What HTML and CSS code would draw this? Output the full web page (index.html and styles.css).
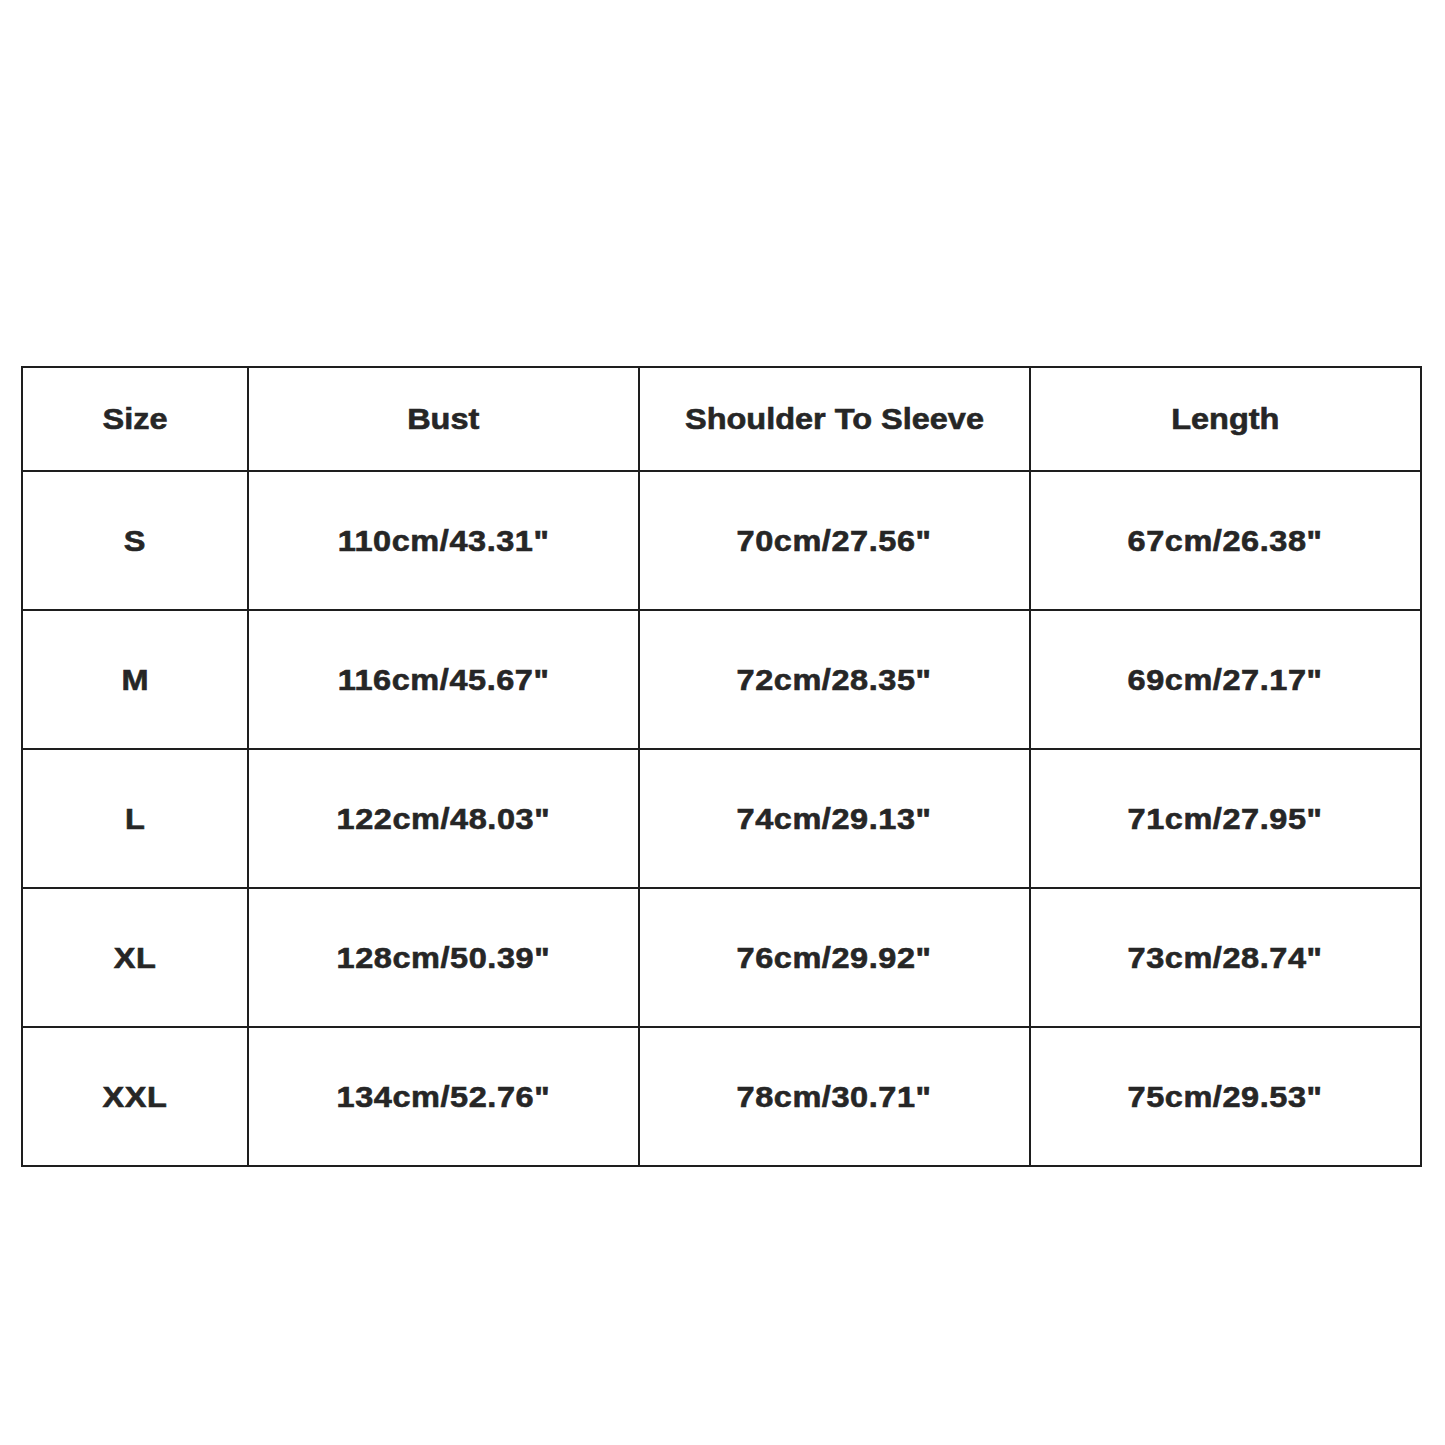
FILE: index.html
```html
<!DOCTYPE html>
<html>
<head>
<meta charset="utf-8">
<link rel="stylesheet" href="styles.css">
</head>
<body>
<div class="chart">
  <div class="cell head"><span>Size</span></div>
  <div class="cell head"><span>Bust</span></div>
  <div class="cell head"><span>Shoulder To Sleeve</span></div>
  <div class="cell head"><span>Length</span></div>

  <div class="cell"><span>S</span></div>
  <div class="cell"><span>110cm/43.31"</span></div>
  <div class="cell"><span>70cm/27.56"</span></div>
  <div class="cell"><span>67cm/26.38"</span></div>

  <div class="cell"><span>M</span></div>
  <div class="cell"><span>116cm/45.67"</span></div>
  <div class="cell"><span>72cm/28.35"</span></div>
  <div class="cell"><span>69cm/27.17"</span></div>

  <div class="cell"><span>L</span></div>
  <div class="cell"><span>122cm/48.03"</span></div>
  <div class="cell"><span>74cm/29.13"</span></div>
  <div class="cell"><span>71cm/27.95"</span></div>

  <div class="cell"><span>XL</span></div>
  <div class="cell"><span>128cm/50.39"</span></div>
  <div class="cell"><span>76cm/29.92"</span></div>
  <div class="cell"><span>73cm/28.74"</span></div>

  <div class="cell"><span>XXL</span></div>
  <div class="cell"><span>134cm/52.76"</span></div>
  <div class="cell"><span>78cm/30.71"</span></div>
  <div class="cell"><span>75cm/29.53"</span></div>
</div>
</body>
</html>
```
FILE: styles.css
```css
html, body {
  margin: 0;
  padding: 0;
  background: #ffffff;
}
body {
  padding: 366px 0 0 21px;
  font-family: "Liberation Sans", Arial, sans-serif;
}
.chart {
  display: grid;
  grid-template-columns: 224px 389px 389px 389px;
  grid-template-rows: 102px repeat(5, 137px);
  gap: 2px;
  padding: 2px;
  background: #1e1e1e;
  width: fit-content;
}
.cell {
  background: #ffffff;
  display: flex;
  align-items: center;
  justify-content: center;
}
.cell span {
  display: inline-block;
  font-size: 29px;
  font-weight: bold;
  color: #262626;
  -webkit-text-stroke: 0.6px #262626;
  letter-spacing: 0.5px;
  transform: scaleX(1.12);
  white-space: nowrap;
  margin-top: 2px;
}
.cell.head span {
  letter-spacing: 0;
  margin-top: 0;
}
```
